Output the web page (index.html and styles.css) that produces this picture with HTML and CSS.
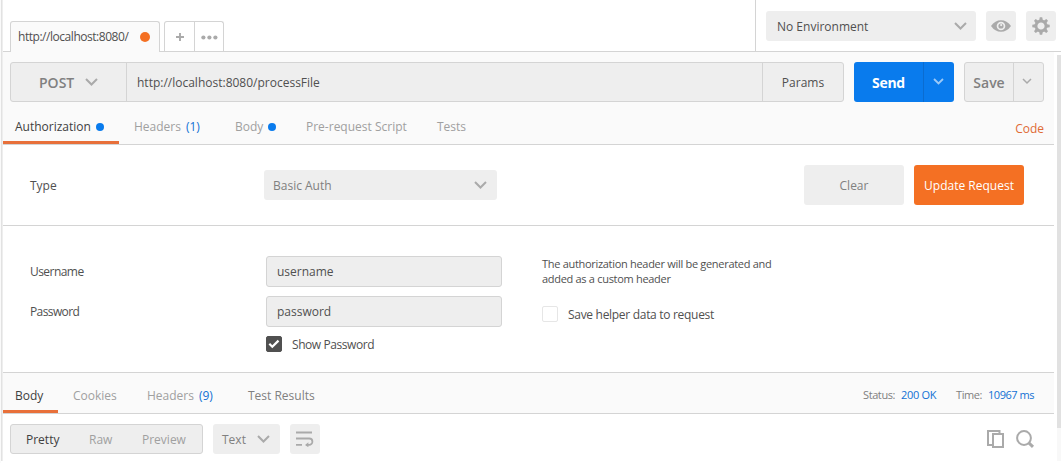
FILE: index.html
```html
<!DOCTYPE html>
<html lang="en">
<head>
<meta charset="utf-8">
<title>Request builder</title>
<link rel="stylesheet" href="styles.css">
</head>
<body>
<div class="app">
  <header class="topbar">
    <div class="tabstrip">
      <div class="tab"><span class="tab-title">http://localhost:8080/</span><i class="dot dot-orange"></i></div>
      <div class="tab-actions">
        <span class="tab-btn"><svg width="8" height="8" viewBox="0 0 8 8"><path d="M4 0v8M0 4h8" stroke="#aaa" stroke-width="1.9"/></svg></span>
        <span class="tab-btn more"><svg width="17" height="5" viewBox="0 0 17 5" fill="#aaa"><circle cx="2.4" cy="2.5" r="2.1"/><circle cx="8.4" cy="2.5" r="2.1"/><circle cx="14.4" cy="2.5" r="2.1"/></svg></span>
      </div>
    </div>
    <div class="environment">
      <div class="select env-select"><span class="drop">No Environment</span><svg width="13" height="8" viewBox="0 0 13 8"><path class="chev" d="M1 1l5.5 5.5L12 1"/></svg></div>
      <div class="icon-btn"><svg width="20" height="12" viewBox="0 0 20 12"><path fill="#aaa" fill-rule="evenodd" d="M0 6Q4 .2 10 .2T20 6Q16 11.8 10 11.8T0 6zM10 1.7a4.3 4.3 0 1 0 0 8.6a4.3 4.3 0 0 0 0-8.6z"/><path fill="#aaa" fill-rule="evenodd" d="M10 3.4a2.6 2.6 0 1 0 0 5.2a2.6 2.6 0 0 0 0-5.2zM10.2 4a1.1 1.1 0 0 1 0 2.2a1.1 1.1 0 0 1 0-2.2z"/></svg></div>
      <div class="icon-btn"><svg width="18" height="18" viewBox="-9 -9 18 18"><circle r="5" fill="none" stroke="#aaa" stroke-width="2.8"/><g fill="#aaa"><path id="tooth" d="M-1.8-5.7L-1.2-8.7H1.2L1.8-5.7z"/><use href="#tooth" transform="rotate(45)"/><use href="#tooth" transform="rotate(90)"/><use href="#tooth" transform="rotate(135)"/><use href="#tooth" transform="rotate(180)"/><use href="#tooth" transform="rotate(225)"/><use href="#tooth" transform="rotate(270)"/><use href="#tooth" transform="rotate(315)"/></g></svg></div>
    </div>
  </header>

  <main class="content">
    <section class="request">
      <div class="url-row">
        <div class="url-bar">
          <div class="method"><span class="t-post">POST</span><svg width="13" height="8" viewBox="0 0 13 8"><path class="chev" d="M1 1l5.5 5.5L12 1"/></svg></div>
          <div class="url"><span class="drop">http://localhost:8080/processFile</span></div>
          <div class="params"><span>Params</span></div>
        </div>
        <div class="split send"><span class="split-main"><span class="t-send">Send</span></span><span class="split-arrow"><svg width="11" height="7" viewBox="0 0 11 7"><path class="chev" d="M1 1l4.5 4.5L10 1"/></svg></span></div>
        <div class="split save"><span class="split-main"><span class="t-save">Save</span></span><span class="split-arrow"><svg width="10" height="7" viewBox="0 0 10 7"><path class="chev" d="M1 1l4 4 4-4"/></svg></span></div>
      </div>
      <nav class="req-tabs">
        <div class="rtab rtab-auth active"><span>Authorization</span><i class="dot dot-blue"></i></div>
        <div class="rtab rtab-headers"><span>Headers</span><span class="count">(1)</span></div>
        <div class="rtab rtab-body"><span>Body</span><i class="dot dot-blue"></i></div>
        <div class="rtab rtab-pre"><span>Pre-request Script</span></div>
        <div class="rtab rtab-tests"><span>Tests</span></div>
        <span class="code-link">Code</span>
      </nav>
    </section>

    <section class="auth-type">
      <span class="type-label drop">Type</span>
      <div class="select type-select"><span class="drop">Basic Auth</span><svg width="13" height="8" viewBox="0 0 13 8"><path class="chev" d="M1 1l5.5 5.5L12 1"/></svg></div>
      <button class="btn btn-clear"><span>Clear</span></button>
      <button class="btn btn-update"><span>Update Request</span></button>
    </section>

    <section class="auth-form">
      <div class="labels"><span>Username</span><span class="label-password">Password</span></div>
      <div class="fields">
        <div class="field"><span>username</span></div>
        <div class="field"><span>password</span></div>
        <div class="check-row"><span class="checkbox checked"><svg width="12" height="10" viewBox="0 0 12 10"><path d="M1.3 4.8l3 3L10.5 1.6" fill="none" stroke="#fff" stroke-width="2.2"/></svg></span><span class="t-show drop">Show Password</span></div>
      </div>
      <div class="helper">
        <p class="note"><span class="t-note">The authorization header will be generated and</span><br><span class="t-note">added as a custom header</span></p>
        <div class="check-row"><span class="checkbox"></span><span class="t-savehelper drop">Save helper data to request</span></div>
      </div>
    </section>

    <nav class="res-tabs">
      <div class="rtab res-body active"><span>Body</span></div>
      <div class="rtab res-cookies"><span>Cookies</span></div>
      <div class="rtab res-headers"><span>Headers</span><span class="count">(9)</span></div>
      <div class="rtab res-tests"><span>Test Results</span></div>
      <div class="meta"><span class="k-status">Status:</span><span class="value v-status">200 OK</span><span class="k-time">Time:</span><span class="value v-time">10967 ms</span></div>
    </nav>

    <div class="viewer-bar">
      <div class="segmented"><span class="seg-pretty">Pretty</span><span class="seg-raw">Raw</span><span class="seg-preview">Preview</span></div>
      <div class="select format"><span class="drop">Text</span><svg width="13" height="8" viewBox="0 0 13 8"><path class="chev" d="M1 1l5.5 5.5L12 1"/></svg></div>
      <div class="icon-btn wrap"><svg width="18" height="16" viewBox="0 0 18 16" fill="none" stroke="#aaa" stroke-width="1.8"><path d="M0 1.5h16M0 7.5h13.2a3.2 3.2 0 0 1 0 6.4H10M0 13.9h6"/><path d="M9 13.9l3.4-2.6v5z" fill="#aaa" stroke="none"/></svg></div>
      <div class="viewer-icons">
        <svg width="18" height="18" viewBox="0 0 18 18" fill="none" stroke="#aaa" stroke-width="2"><path d="M12.5 3V1H1v14h4"/><path d="M6 4h10v13H6z"/></svg>
        <svg width="19" height="18" viewBox="0 0 19 18" fill="none" stroke="#aaa"><circle cx="8" cy="8" r="6.9" stroke-width="2"/><path d="M12.8 12.8l4.2 4" stroke-width="3"/></svg>
      </div>
    </div>
  </main>
  <div class="scrollbar"><div class="thumb"></div></div>
</div>
</body>
</html>
```
FILE: styles.css
```css
* { box-sizing: border-box; }
body {
  margin: 0;
  background: #fff;
  color: #505050;
  font: 12px/16px "Open Sans", "Noto Sans", sans-serif;
}
svg { display: block; flex: none; }
span { white-space: nowrap; }
.chev { fill: none; stroke: #aaa; stroke-width: 2; }
.drop { padding-top: 2px; }

.app {
  position: relative;
  width: 1062px;
  height: 463px;
  overflow: hidden;
  border-left: 1px solid #fafafa;
}
.app::before {
  content: "";
  position: absolute;
  left: 0;
  top: 0;
  width: 2px;
  height: 461px;
  background: linear-gradient(90deg, #dcdcdc, #f4f4f4);
}

/* Top bar */
.topbar {
  display: flex;
  justify-content: space-between;
  width: 1060px;
  height: 52px;
  border-bottom: 1px solid #d4d4d4;
}
.tabstrip { display: flex; align-items: flex-end; padding-left: 9px; gap: 4px; }
.tab {
  display: flex;
  align-items: center;
  justify-content: space-between;
  width: 150px;
  height: 31px;
  margin-bottom: -1px;
  padding: 0 9px 0 7px;
  background: #fafafa;
  border: 1px solid #d4d4d4;
  border-bottom: 0;
  border-radius: 3px 3px 0 0;
  position: relative;
}
.tab-title { letter-spacing: -0.46px; }
.dot { width: 8px; height: 8px; border-radius: 50%; flex: none; }
.dot-orange { width: 10px; height: 10px; background: #f47023; }
.dot-blue { background: #097bed; }
.tab-actions {
  display: flex;
  height: 30px;
  border: 1px solid #d4d4d4;
  border-bottom: 0;
  border-radius: 3px 3px 0 0;
}
.tab-btn { display: flex; align-items: center; justify-content: center; width: 29px; padding-top: 1px; }
.more { border-left: 1px solid #d4d4d4; }
.environment {
  display: flex;
  gap: 11px;
  width: 306px;
  padding: 11px 0 0 10px;
  border-left: 1px solid #d4d4d4;
}
.select {
  display: flex;
  align-items: center;
  justify-content: space-between;
  height: 30px;
  background: #eee;
  border-radius: 3px;
}
.env-select { width: 210px; padding: 0 9px 0 11px; }
.icon-btn {
  display: flex;
  align-items: center;
  justify-content: center;
  width: 30px;
  height: 30px;
  background: #eee;
  border-radius: 3px;
}
.environment .icon-btn { margin-left: -1px; }
.environment .icon-btn + .icon-btn { margin-left: -1px; }

/* Request */
.content { width: 1053px; }
.request { height: 93px; padding-top: 10px; background: #fafafa; border-bottom: 1px solid #d4d4d4; }
.url-row { display: flex; gap: 10px; padding-left: 9px; height: 40px; }
.url-bar {
  display: flex;
  width: 834px;
  background: #eee;
  border: 1px solid #d4d4d4;
  border-radius: 3px;
}
.url-bar > div { display: flex; align-items: center; }
.method { width: 116px; padding-left: 28px; gap: 11px; border-right: 1px solid #d4d4d4; }
.url { flex: 1; padding-left: 10px; }
.params { width: 81px; justify-content: center; padding-top: 2px; border-left: 1px solid #d4d4d4; }
.t-post { font-size: 14px; font-weight: 600; color: #808080; padding-top: 2px; }
.split { display: flex; border-radius: 3px; }
.split > span { display: flex; align-items: center; justify-content: center; }
.send { width: 100px; background: #097bed; color: #fff; }
.send .split-main { width: 69px; padding-top: 2px; }
.send .split-arrow { flex: 1; border-left: 1px solid #0a6cd0; padding: 0 2px 1px 0; }
.send .chev { stroke: #9cc9f7; stroke-width: 1.8; }
.save { width: 80px; background: #eee; border: 1px solid #d4d4d4; color: #808080; }
.save .split-main { width: 48px; padding-top: 2px; }
.save .split-arrow { flex: 1; border-left: 1px solid #d4d4d4; padding: 0 3px 1px 0; }
.save .chev { stroke-width: 1.5; }
.t-send, .t-save { font-size: 14px; font-weight: 600; }
.t-send { font-weight: 700; letter-spacing: -0.3px; }

.req-tabs { display: flex; height: 42px; }
.rtab { display: flex; align-items: center; gap: 5px; color: #a0a0a0; flex: none; }
.req-tabs .rtab { padding-top: 8px; }
.active { color: #404040; border-bottom: 3px solid #e8703a; }
.req-tabs .active { padding-top: 11px; }
.count { color: #1271d4; }
.rtab-auth { width: 118px; padding-left: 14px; }
.rtab-headers { width: 101px; padding-left: 15px; }
.rtab-body { width: 71px; padding-left: 15px; }
.rtab-pre { width: 131px; padding-left: 15px; }
.rtab-tests { padding-left: 15px; }
.req-tabs .code-link { margin: 19px 10px 0 auto; color: #e06a35; }

/* Authorization type */
.auth-type { display: flex; align-items: center; height: 81px; padding-left: 29px; border-bottom: 1px solid #d4d4d4; }
.type-label { width: 234px; }
.type-select { width: 233px; margin-right: 307px; padding: 0 10px 0 9px; color: #808080; }
.btn { height: 40px; padding: 2px 0 0; border: 0; border-radius: 3px; font: inherit; }
.btn-clear { width: 100px; margin-right: 10px; background: #eee; color: #808080; }
.btn-update { width: 110px; background: #f47023; color: #fff; }

/* Credentials */
.auth-form { display: flex; height: 147px; padding: 30px 0 0 29px; border-bottom: 1px solid #d4d4d4; }
.labels { display: flex; flex-direction: column; gap: 24px; width: 236px; padding-top: 8px; letter-spacing: -0.55px; }
.labels .label-password { letter-spacing: -0.6px; }
.fields { width: 236px; }
.field {
  display: flex;
  align-items: center;
  height: 31px;
  margin-bottom: 9px;
  padding-left: 10px;
  background: #eee;
  border: 1px solid #d4d4d4;
  border-radius: 3px;
}
.check-row { display: flex; align-items: center; gap: 10px; height: 16px; }
.checkbox {
  display: flex;
  align-items: center;
  justify-content: center;
  width: 16px;
  height: 16px;
  border: 1px solid #e6e6e6;
  border-radius: 2px;
}
.checked { background: #505050; border-color: #505050; }
.t-show { letter-spacing: -0.43px; }
.t-savehelper { letter-spacing: -0.3px; }
.helper { padding-left: 40px; }
.note { margin: 0 0 20px; font-size: 11px; line-height: 15px; }
.t-note { letter-spacing: -0.3px; }

/* Response */
.res-tabs { display: flex; height: 41px; background: #fafafa; border-bottom: 1px solid #d4d4d4; }
.res-tabs .rtab { padding-top: 6px; }
.res-tabs .active { padding-top: 8px; }
.res-body { width: 57px; padding-left: 14px; }
.res-cookies { width: 74px; padding-left: 15px; }
.res-headers { width: 101px; padding-left: 15px; }
.res-tests { padding-left: 15px; color: #808080; }
.meta { display: flex; margin: 14px 19px 0 auto; font-size: 11px; color: #808080; }
.value { color: #1271d4; }
.k-status { width: 38px; letter-spacing: -0.4px; }
.v-status { width: 55px; letter-spacing: -0.3px; }
.k-time { width: 32px; letter-spacing: -0.4px; }
.v-time { width: 47px; letter-spacing: -0.45px; }
.viewer-bar { display: flex; gap: 10px; height: 49px; padding: 10px 0 0 9px; }
.segmented {
  display: flex;
  align-items: center;
  width: 193px;
  height: 30px;
  padding-top: 1px;
  background: #eee;
  border: 1px solid #d4d4d4;
  border-radius: 3px;
  color: #a0a0a0;
}
.seg-pretty { width: 63px; padding-left: 15px; color: #404040; }
.seg-raw { width: 54px; padding-left: 15px; }
.seg-preview { padding-left: 14px; }
.format { width: 67px; padding: 0 10px 0 9px; color: #808080; }
.viewer-icons { display: flex; gap: 11px; margin: 6px 19px 0 auto; }

.scrollbar { position: absolute; top: 55px; left: 1056px; width: 4px; height: 406px; background: #f8f8f8; }
.thumb { height: 373px; background: #e1e1e1; }
```
